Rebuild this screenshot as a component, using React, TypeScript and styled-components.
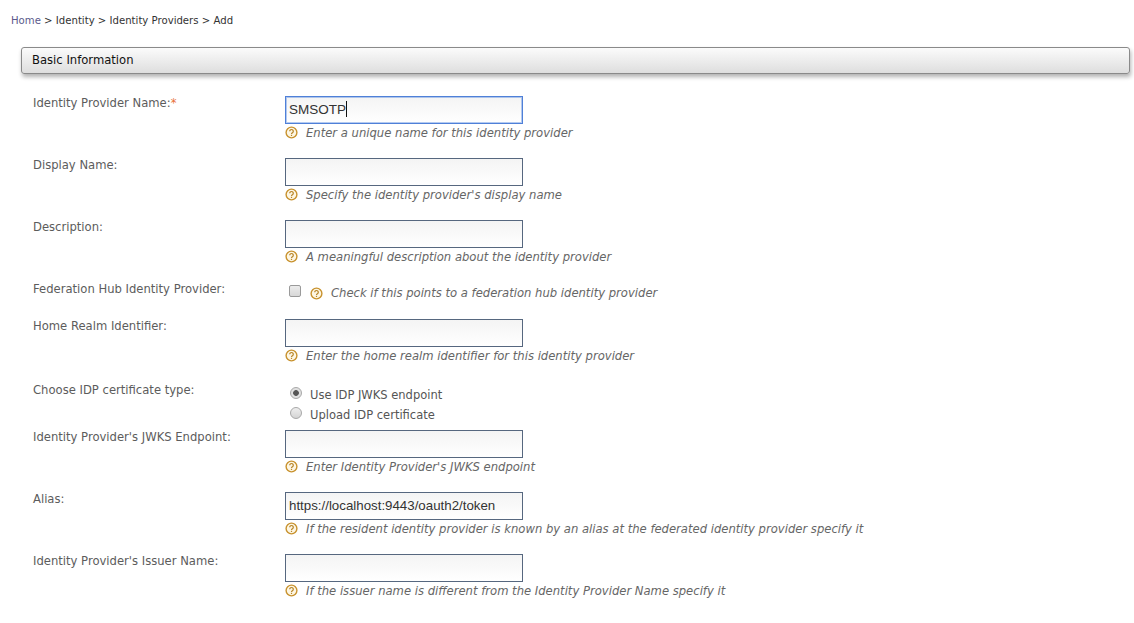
import React from "react";
import styled, { createGlobalStyle } from "styled-components";

const Global = createGlobalStyle`
  html, body { margin: 0; padding: 0; background: #fff; }
  body { font-family: "DejaVu Sans", "Liberation Sans", sans-serif; font-size: 11.6px; color: #555; }
`;

const Page = styled.div`
  width: 1134px;
  height: 623px;
  overflow: hidden;
  box-sizing: border-box;
  padding: 14px 4px 0 21px;
`;

const Crumbs = styled.div`
  margin-left: -10px;
  height: 14px;
  line-height: 14px;
  font-size: 10.15px;
  color: #333;
  span { color: #5a5a8c; }
`;

const SectionBar = styled.div`
  margin-top: 19px;
  height: 27px;
  box-sizing: border-box;
  border: 1px solid #8a8a8a;
  border-radius: 3px;
  background: linear-gradient(to bottom, #fbfbfb, #dedede);
  box-shadow: 1px 3px 4px rgba(0, 0, 0, 0.3);
  padding-left: 10px;
  line-height: 24px;
  font-size: 11.6px;
  color: #111;
`;

const Form = styled.div`
  margin-top: 22px;
  padding-left: 12px;
`;

const Row = styled.div<{ $h: number }>`
  display: grid;
  grid-template-columns: 252px 1fr;
  height: ${(p) => p.$h}px;
`;

const Label = styled.div<{ $top?: number }>`
  line-height: 14px;
  color: #5c5c5c;
  padding-top: ${(p) => p.$top ?? 0}px;
`;

const Star = styled.span`
  color: #e8713c;
`;

const Input = styled.div<{ $focus?: boolean }>`
  box-sizing: border-box;
  width: 238px;
  height: 28px;
  border: 1px solid ${(p) => (p.$focus ? "#4f80d8" : "#56677f")};
  box-shadow: ${(p) => (p.$focus ? "0 0 0 1px rgba(90, 140, 225, 0.45) inset" : "none")};
  background: linear-gradient(to bottom, #f4f4f4, #fff);
  padding-left: 3px;
  font-family: "Liberation Sans", Arial, sans-serif;
  font-size: ${(p) => (p.$focus ? "13.5px" : "13.3px")};
  line-height: 26px;
  color: #333;
`;

const Caret = styled.span`
  display: inline-block;
  width: 1px;
  height: 16px;
  background: #111;
  vertical-align: -3px;
`;

const Help = styled.div`
  display: flex;
  align-items: center;
  gap: 8px;
  height: 17px;
  font-style: italic;
  color: #666;
`;

const Controls = styled.div`
  display: flex;
  align-items: center;
  gap: 8px;
  margin-left: 4px;
  height: 20px;
  margin-top: 1px;
`;

const Check = styled.div`
  box-sizing: border-box;
  width: 12px;
  height: 12px;
  margin: -4px 1px 0 0;
  border: 1px solid #9a9a9a;
  border-radius: 2px;
  background: linear-gradient(to bottom, #ececec, #d8d8d8);
`;

const RadioList = styled.div`
  padding-top: 4px;
`;

const RadioRow = styled.div`
  display: flex;
  align-items: center;
  gap: 8px;
  height: 20px;
  margin-left: 5px;
  color: #555;
  font-size: 11.5px;
`;

const Radio = styled.div<{ $on?: boolean }>`
  box-sizing: border-box;
  width: 12px;
  height: 12px;
  margin-top: -4px;
  border-radius: 50%;
  border: 1px solid #a8a8a8;
  background: ${(p) =>
    p.$on
      ? "radial-gradient(circle, #555 0 2.5px, #e0e0e0 3.2px)"
      : "linear-gradient(to bottom, #eee, #d4d4d4)"};
`;

const HelpIcon = () => (
  <svg width="13" height="13" viewBox="0 0 13 13" style={{ flex: "none" }}>
    <circle cx="6.5" cy="6.5" r="5.4" fill="#fdf6e3" stroke="#c8922e" strokeWidth="1.4" />
    <path d="M4.7 5.2a1.8 1.7 0 1 1 2.7 1.5c-.6.4-.9.6-.9 1.3" fill="none" stroke="#b8862a" strokeWidth="1.2" />
    <rect x="5.9" y="8.8" width="1.2" height="1.2" fill="#b8862a" />
  </svg>
);

type Field = { label: string; help: string; value?: string; focus?: boolean; star?: boolean };

const TextRow = ({ label, help, value, focus, star }: Field) => (
  <Row $h={62}>
    <Label>
      {label}
      {star && <Star>*</Star>}
    </Label>
    <div>
      <Input $focus={focus}>
        {value}
        {focus && <Caret />}
      </Input>
      <Help>
        <HelpIcon />
        {help}
      </Help>
    </div>
  </Row>
);

export default function App() {
  return (
    <Page>
      <Global />
      <Crumbs>
        <span>Home</span> &gt; Identity &gt; Identity Providers &gt; Add
      </Crumbs>
      <SectionBar>Basic Information</SectionBar>
      <Form>
        <TextRow label="Identity Provider Name:" star value="SMSOTP" focus help="Enter a unique name for this identity provider" />
        <TextRow label="Display Name:" help="Specify the identity provider's display name" />
        <TextRow label="Description:" help="A meaningful description about the identity provider" />
        <Row $h={37}>
          <Label>Federation Hub Identity Provider:</Label>
          <Controls>
            <Check />
            <HelpIcon />
            <Help>Check if this points to a federation hub identity provider</Help>
          </Controls>
        </Row>
        <TextRow label="Home Realm Identifier:" help="Enter the home realm identifier for this identity provider" />
        <Row $h={49}>
          <Label $top={2}>Choose IDP certificate type:</Label>
          <RadioList>
            <RadioRow>
              <Radio $on />
              Use IDP JWKS endpoint
            </RadioRow>
            <RadioRow>
              <Radio />
              Upload IDP certificate
            </RadioRow>
          </RadioList>
        </Row>
        <TextRow label="Identity Provider's JWKS Endpoint:" help="Enter Identity Provider's JWKS endpoint" />
        <TextRow label="Alias:" value="https://localhost:9443/oauth2/token" help="If the resident identity provider is known by an alias at the federated identity provider specify it" />
        <TextRow label="Identity Provider's Issuer Name:" help="If the issuer name is different from the Identity Provider Name specify it" />
      </Form>
    </Page>
  );
}
